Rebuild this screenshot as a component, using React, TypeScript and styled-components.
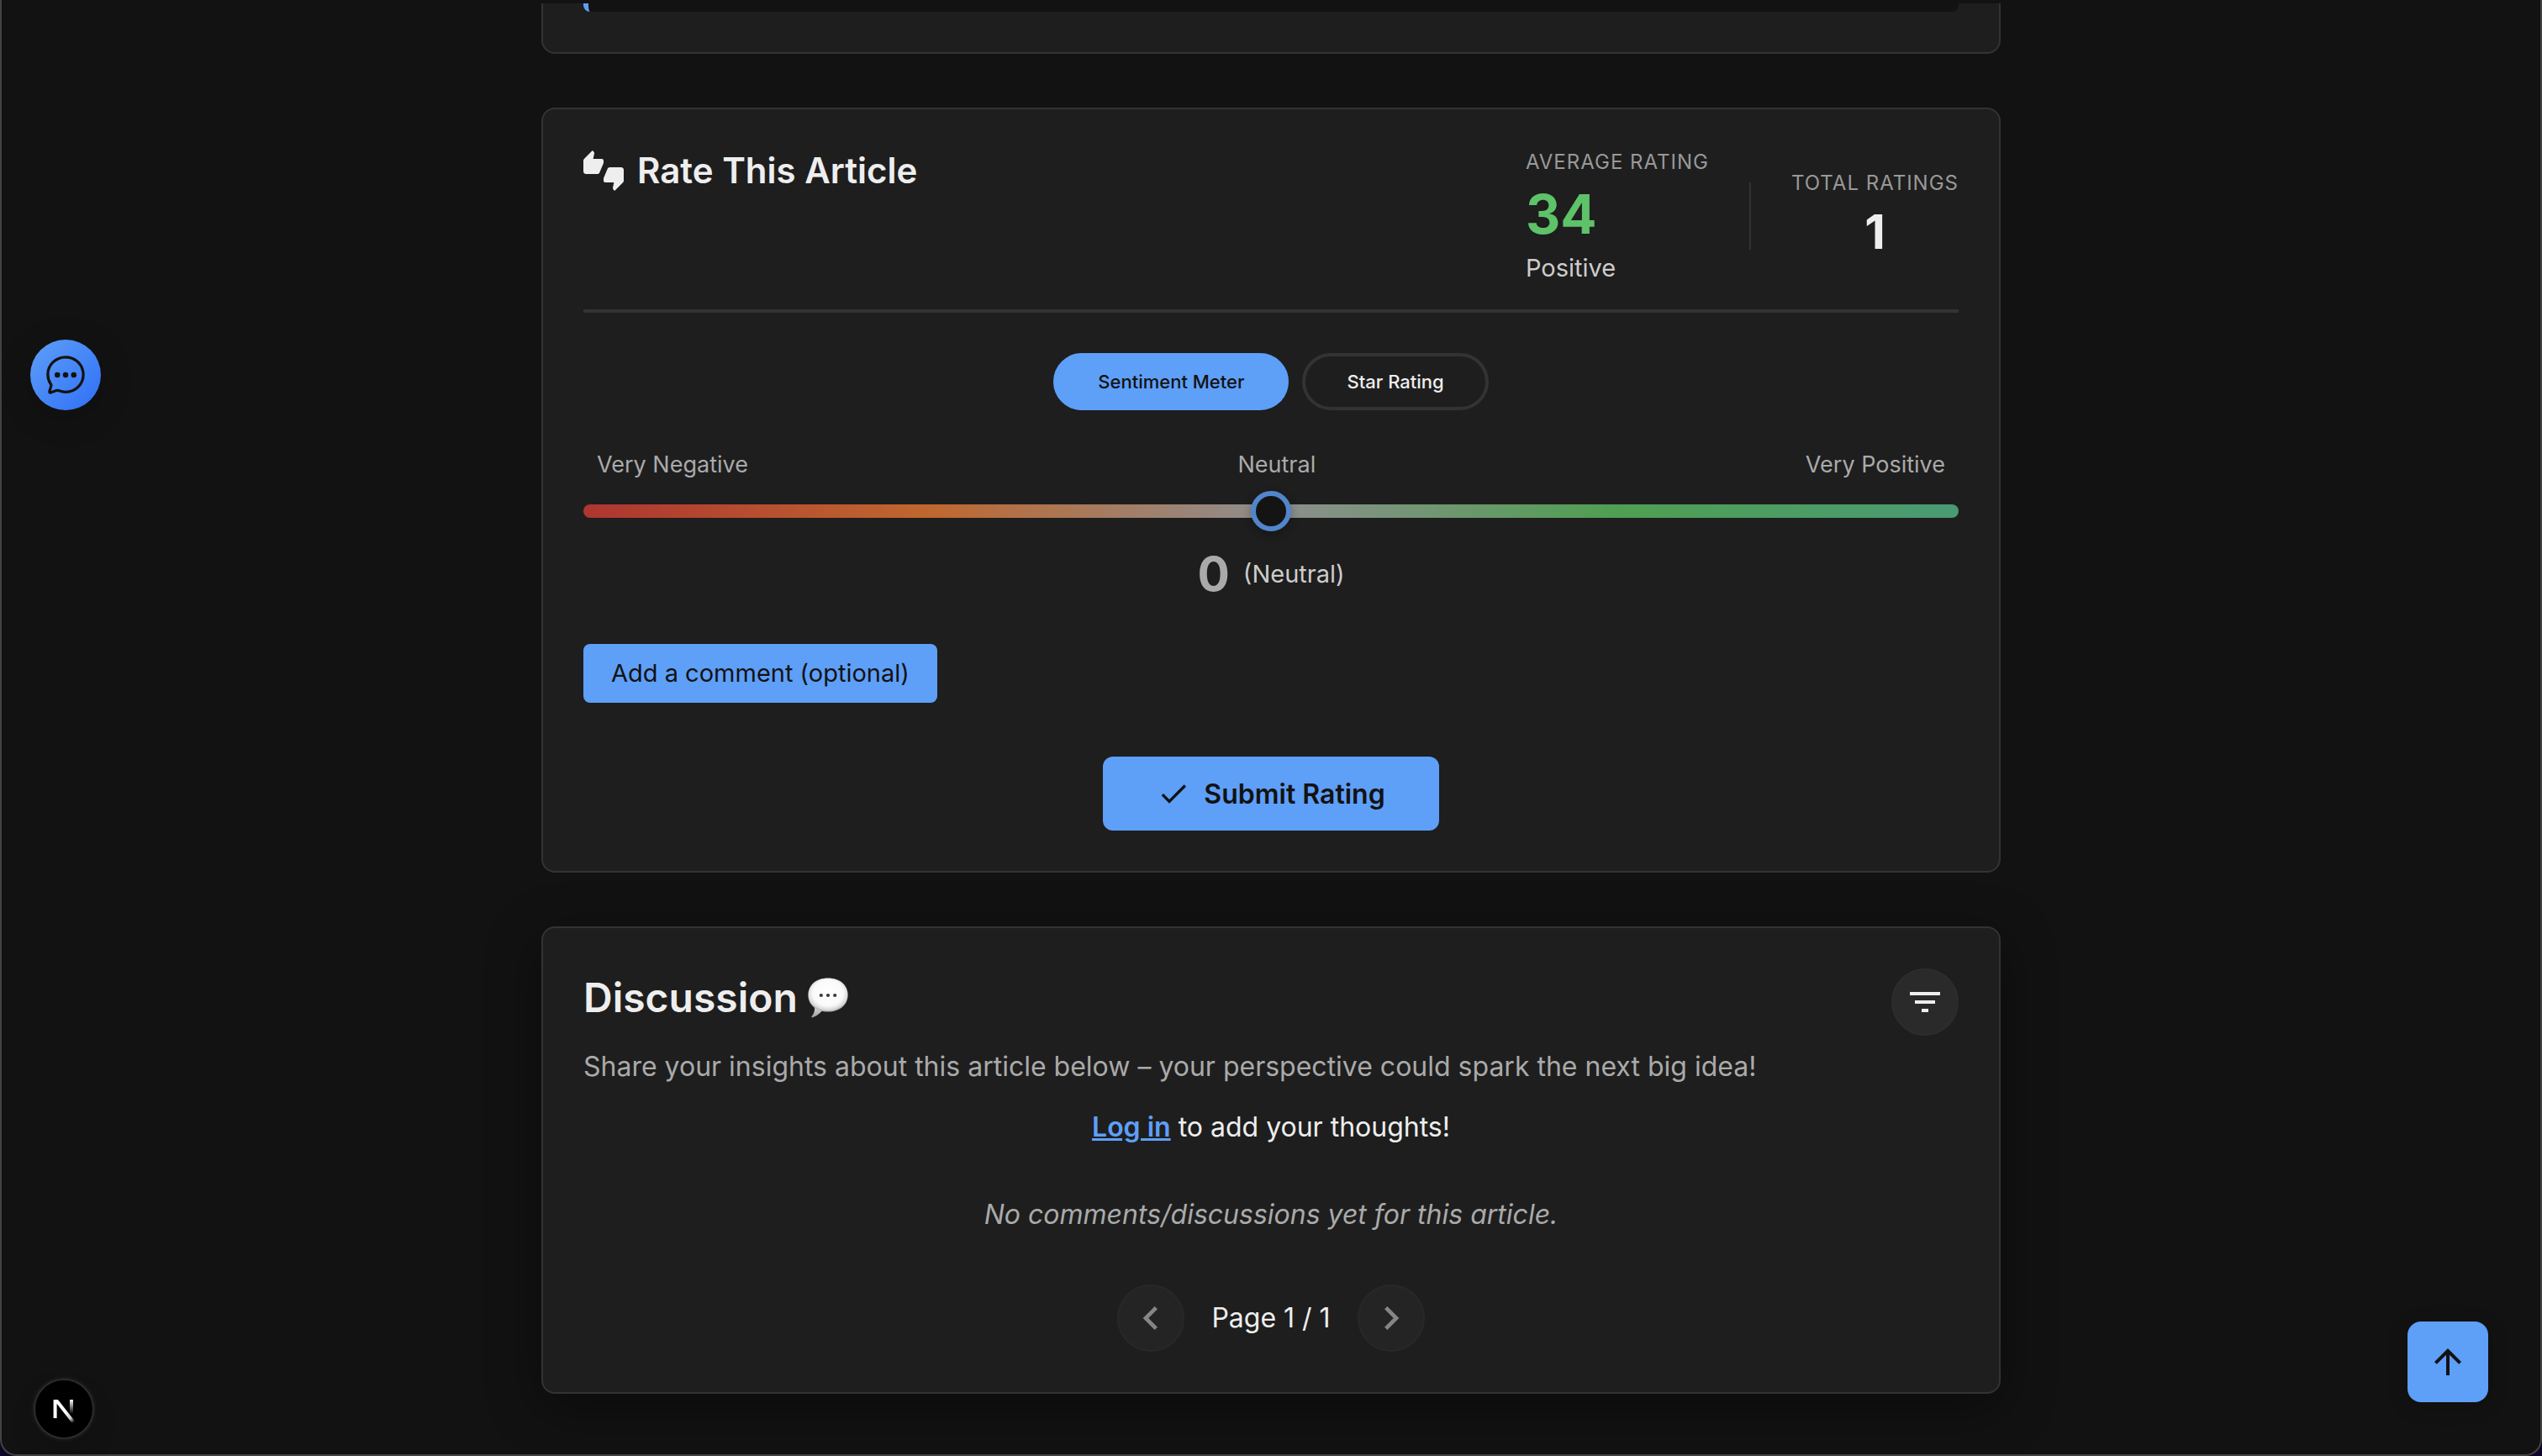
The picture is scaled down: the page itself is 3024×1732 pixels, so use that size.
import React, { useState } from 'react';
import styled, { createGlobalStyle } from 'styled-components';
import {
  MdArrowUpward,
  MdCheck,
  MdChevronLeft,
  MdChevronRight,
  MdFilterList,
  MdThumbsUpDown,
} from 'react-icons/md';
import { IoChatbubbleEllipsesOutline } from 'react-icons/io5';

const color = {
  page: '#121212',
  card: '#1e1e1e',
  raised: '#2a2a2a',
  border: '#333333',
  frame: '#434343',
  text: '#eeeeee',
  soft: '#cccccc',
  muted: '#aaaaaa',
  faint: '#999999',
  blue: '#5e9ff8',
  green: '#5ec269',
};

const GlobalStyle = createGlobalStyle`
  *, *::before, *::after { box-sizing: border-box; }
  body {
    margin: 0;
    background: #0e0529;
    color: ${color.text};
    font-family: Inter, "Noto Sans", sans-serif;
    font-size: 32px;
    line-height: 50px;
  }
  h2, p { margin: 0; }
  button, input { font-family: inherit; margin: 0; }
  button { cursor: pointer; }
`;

const Page = styled.div`
  min-height: 100vh;
  background: ${color.page};
  border: 2px solid ${color.frame};
  border-top: 0;
  border-radius: 0 0 20px 20px;
`;

const TopEdge = styled.div`
  height: 4px;
`;

const Column = styled.main`
  display: flex;
  flex-direction: column;
  gap: 64px;
  width: 100%;
  max-width: 1736px;
  margin: 0 auto;
`;

const Card = styled.section<{ $lifted?: boolean }>`
  padding: 48px;
  background: ${color.card};
  border: 2px solid ${color.border};
  border-radius: 16px;
  box-shadow: ${(p) => (p.$lifted ? '0 16px 64px rgba(0, 0, 0, 0.4)' : 'none')};
`;

const ArticleEnd = styled(Card)`
  padding-top: 0;
  border-top: 0;
  border-radius: 0 0 16px 16px;
`;

const Quote = styled.blockquote`
  height: 10px;
  margin: 0;
  background: ${color.page};
  border-left: 6px solid ${color.blue};
  border-radius: 0 0 8px 8px;
`;

const RatingHeader = styled.header`
  display: flex;
  justify-content: space-between;
  align-items: flex-start;
  padding-bottom: 32px;
  border-bottom: 4px solid ${color.border};
`;

const RatingTitle = styled.h2`
  display: flex;
  align-items: center;
  gap: 16px;
  font-size: 42px;
  font-weight: 600;
  line-height: 50px;
`;

const Stats = styled.div`
  display: flex;
  align-items: center;
  gap: 48px;
`;

const Stat = styled.div<{ $centered?: boolean }>`
  display: flex;
  flex-direction: column;
  gap: 8px;
  align-items: ${(p) => (p.$centered ? 'center' : 'flex-start')};
`;

const StatLabel = styled.span`
  color: ${color.faint};
  font-size: 24px;
  line-height: 30px;
  letter-spacing: 1px;
  text-transform: uppercase;
`;

const AverageValue = styled.strong`
  color: ${color.green};
  font-size: 64px;
  font-weight: 700;
  line-height: 78px;
`;

const TotalValue = styled.strong`
  font-size: 57px;
  font-weight: 700;
  line-height: 70px;
`;

const StatNote = styled.span`
  color: ${color.soft};
  font-size: 29px;
  line-height: 34px;
`;

const StatDivider = styled.div`
  width: 2px;
  height: 80px;
  background: ${color.border};
`;

const Tabs = styled.div`
  display: flex;
  justify-content: center;
  gap: 16px;
  margin-top: 48px;
`;

const Tab = styled.button<{ $active: boolean }>`
  height: 68px;
  padding: 0 49px;
  border: 4px solid ${(p) => (p.$active ? color.blue : color.border)};
  border-radius: 34px;
  background: ${(p) => (p.$active ? color.blue : 'transparent')};
  color: ${(p) => (p.$active ? color.page : color.text)};
  font-size: 22px;
  font-weight: 500;
  line-height: 28px;
`;

const Scale = styled.div`
  display: flex;
  justify-content: space-between;
  margin: 48px 0 14px;
  padding: 0 16px;
  color: ${color.muted};
  font-size: 27px;
  line-height: 34px;
`;

const Slider = styled.input`
  display: block;
  width: 100%;
  height: 48px;
  appearance: none;
  background: transparent;
  opacity: 0.8;

  &::-webkit-slider-runnable-track {
    height: 16px;
    border-radius: 8px;
    background: linear-gradient(
      to right,
      #d23b35 0%,
      #e87933 25%,
      #ababab 50%,
      #5bbf5f 75%,
      #55b98a 100%
    );
  }

  &::-webkit-slider-thumb {
    appearance: none;
    width: 48px;
    height: 48px;
    margin-top: -16px;
    border: 6px solid ${color.blue};
    border-radius: 50%;
    background: ${color.page};
    box-shadow: 0 4px 12px rgba(0, 0, 0, 0.3);
  }
`;

const Reading = styled.output`
  display: flex;
  justify-content: center;
  align-items: center;
  gap: 16px;
  margin-top: 16px;
`;

const ReadingValue = styled.strong`
  color: ${color.muted};
  font-size: 57px;
  font-weight: 700;
  line-height: 70px;
`;

const CommentButton = styled.button`
  display: block;
  height: 70px;
  margin-top: 48px;
  padding: 0 33px;
  border: 0;
  border-radius: 8px;
  background: ${color.blue};
  color: ${color.page};
  font-size: 29px;
  line-height: 34px;
`;

const SubmitButton = styled.button`
  display: flex;
  align-items: center;
  gap: 16px;
  height: 88px;
  margin: 64px auto 0;
  padding: 0 64px;
  border: 0;
  border-radius: 12px;
  background: ${color.blue};
  color: ${color.page};
  font-size: 32px;
  font-weight: 600;
`;

const DiscussionHeader = styled.header`
  display: flex;
  justify-content: space-between;
  align-items: flex-start;
`;

const DiscussionTitle = styled.h2`
  display: flex;
  align-items: center;
  gap: 12px;
  font-size: 48px;
  font-weight: 600;
  line-height: 70px;
`;

const RoundButton = styled.button`
  display: grid;
  place-items: center;
  width: 80px;
  height: 80px;
  padding: 0;
  border: 2px solid ${color.border};
  border-radius: 50%;
  background: ${color.raised};
  color: ${color.text};

  &:disabled {
    opacity: 0.5;
    cursor: default;
  }
`;

const FilterButton = styled(RoundButton)`
  border-color: #2d2d2d;
`;

const Invitation = styled.p`
  margin-top: 12px;
  color: ${color.muted};
`;

const LoginPrompt = styled.p`
  margin-top: 22px;
  text-align: center;
`;

const LoginLink = styled.a`
  color: ${color.blue};
  font-weight: 600;
  text-decoration: underline;
`;

const EmptyNote = styled.p`
  padding: 54px 0 58px;
  color: ${color.muted};
  font-style: italic;
  text-align: center;
`;

const Pagination = styled.nav`
  display: flex;
  justify-content: center;
  align-items: center;
  gap: 32px;
`;

const ChatButton = styled.button`
  position: fixed;
  top: 404px;
  left: 36px;
  display: grid;
  place-items: center;
  width: 84px;
  height: 84px;
  padding: 0;
  border: 0;
  border-radius: 50%;
  background: linear-gradient(135deg, ${color.blue}, #2f6ff6);
  color: ${color.page};
  box-shadow: 0 8px 40px rgba(0, 0, 0, 0.2);
`;

const TopButton = styled.button`
  position: fixed;
  right: 64px;
  bottom: 64px;
  display: grid;
  place-items: center;
  width: 96px;
  height: 96px;
  padding: 0;
  border: 0;
  border-radius: 16px;
  background: ${color.blue};
  color: ${color.page};
  box-shadow: 0 4px 24px rgba(0, 0, 0, 0.2);
`;

const DevBadge = styled.button`
  position: fixed;
  bottom: 20px;
  left: 40px;
  display: grid;
  place-items: center;
  width: 72px;
  height: 72px;
  padding: 0;
  border: 2px solid #2b2b2b;
  border-radius: 50%;
  background: #000000;
  box-shadow: 0 0 4px #2b2b2b, 0 16px 32px rgba(0, 0, 0, 0.12);
`;

function SpeechBalloon() {
  return (
    <svg width="48" height="48" viewBox="0 0 48 48" role="img" aria-label="speech balloon">
      <defs>
        <radialGradient id="balloonFace" cx="0.5" cy="0.44" r="0.56">
          <stop offset="0" stopColor="#ffffff" />
          <stop offset="0.68" stopColor="#fafafa" />
          <stop offset="0.88" stopColor="#dcdcdc" />
          <stop offset="1" stopColor="#a9a9a9" />
        </radialGradient>
        <linearGradient id="balloonTail" x1="0" y1="0" x2="0" y2="1">
          <stop offset="0" stopColor="#d8d8d8" />
          <stop offset="1" stopColor="#9c9c9c" />
        </linearGradient>
      </defs>
      <path
        d="M8 35 C8.6 39 7.4 42.6 4.6 46 C4 47 4.8 47.6 6 47.2 C10.6 45.4 14 42.6 17 39.4 Z"
        fill="url(#balloonTail)"
      />
      <path
        d="M24 0.4 C10 0.4 0.4 8.6 0.4 20.6 C0.4 32.6 10 40.6 24 40.6 C38 40.6 47.6 32.6 47.6 20.6 C47.6 8.6 38 0.4 24 0.4 Z"
        fill="url(#balloonFace)"
      />
      <circle cx="15.8" cy="21" r="2.1" fill="#3a3a3a" />
      <circle cx="24" cy="21" r="2.1" fill="#3a3a3a" />
      <circle cx="32.2" cy="21" r="2.1" fill="#3a3a3a" />
    </svg>
  );
}

function NextLogo() {
  return (
    <svg width="68" height="68" viewBox="2 2 68 68" fill="none" aria-hidden="true">
      <defs>
        <linearGradient id="diagonal" x1="38" y1="40" x2="48" y2="52" gradientUnits="userSpaceOnUse">
          <stop stopColor="#ffffff" />
          <stop offset="0.6" stopColor="#ffffff" stopOpacity="0.8" />
          <stop offset="1" stopColor="#ffffff" stopOpacity="0" />
        </linearGradient>
        <linearGradient id="stem" x1="45" y1="25" x2="45" y2="42" gradientUnits="userSpaceOnUse">
          <stop stopColor="#ffffff" />
          <stop offset="1" stopColor="#ffffff" stopOpacity="0" />
        </linearGradient>
        <clipPath id="crop">
          <rect x="20" y="25" width="32" height="30" />
        </clipPath>
      </defs>
      <g clipPath="url(#crop)" strokeWidth="4">
        <path d="M47.6 52L25.6 24V47" stroke="url(#diagonal)" />
        <path d="M45 25V42" stroke="url(#stem)" />
      </g>
    </svg>
  );
}

const toneOf = (value: number) => {
  if (value <= -60) return 'Very Negative';
  if (value < 0) return 'Negative';
  if (value === 0) return 'Neutral';
  return value < 60 ? 'Positive' : 'Very Positive';
};

const METHODS = ['Sentiment Meter', 'Star Rating'];

function RatingCard() {
  const [method, setMethod] = useState(METHODS[0]);
  const [value, setValue] = useState(0);

  return (
    <Card>
      <RatingHeader>
        <RatingTitle>
          <MdThumbsUpDown size={48} aria-hidden="true" />
          Rate This Article
        </RatingTitle>
        <Stats>
          <Stat>
            <StatLabel>Average Rating</StatLabel>
            <AverageValue>34</AverageValue>
            <StatNote>Positive</StatNote>
          </Stat>
          <StatDivider />
          <Stat $centered>
            <StatLabel>Total Ratings</StatLabel>
            <TotalValue>1</TotalValue>
          </Stat>
        </Stats>
      </RatingHeader>

      <Tabs>
        {METHODS.map((name) => (
          <Tab
            key={name}
            type="button"
            $active={name === method}
            aria-pressed={name === method}
            onClick={() => setMethod(name)}
          >
            {name}
          </Tab>
        ))}
      </Tabs>

      <Scale>
        <span>Very Negative</span>
        <span>Neutral</span>
        <span>Very Positive</span>
      </Scale>
      <Slider
        id="sentiment"
        type="range"
        min={-100}
        max={100}
        value={value}
        aria-label="Sentiment"
        onChange={(e) => setValue(Number(e.target.value))}
      />
      <Reading htmlFor="sentiment">
        <ReadingValue>{value}</ReadingValue>
        <StatNote>({toneOf(value)})</StatNote>
      </Reading>

      <CommentButton type="button">Add a comment (optional)</CommentButton>
      <SubmitButton type="button">
        <MdCheck size={40} aria-hidden="true" />
        Submit Rating
      </SubmitButton>
    </Card>
  );
}

function DiscussionCard() {
  return (
    <Card $lifted>
      <DiscussionHeader>
        <DiscussionTitle>
          Discussion
          <SpeechBalloon />
        </DiscussionTitle>
        <FilterButton type="button" aria-label="Filter comments">
          <MdFilterList size={48} />
        </FilterButton>
      </DiscussionHeader>
      <Invitation>
        Share your insights about this article below – your perspective could spark the next big
        idea!
      </Invitation>
      <LoginPrompt>
        <LoginLink href="#login">Log in</LoginLink> to add your thoughts!
      </LoginPrompt>
      <EmptyNote>No comments/discussions yet for this article.</EmptyNote>
      <Pagination aria-label="Comment pages">
        <RoundButton type="button" disabled aria-label="Previous page">
          <MdChevronLeft size={56} />
        </RoundButton>
        <span>Page 1 / 1</span>
        <RoundButton type="button" disabled aria-label="Next page">
          <MdChevronRight size={56} />
        </RoundButton>
      </Pagination>
    </Card>
  );
}

export default function App() {
  return (
    <>
      <GlobalStyle />
      <Page>
        <TopEdge />
        <Column>
          <ArticleEnd>
            <Quote />
          </ArticleEnd>
          <RatingCard />
          <DiscussionCard />
        </Column>
      </Page>
      <ChatButton type="button" aria-label="Open chat">
        <IoChatbubbleEllipsesOutline size={52} />
      </ChatButton>
      <DevBadge type="button" aria-label="Open developer tools">
        <NextLogo />
      </DevBadge>
      <TopButton type="button" aria-label="Back to top">
        <MdArrowUpward size={48} />
      </TopButton>
    </>
  );
}
